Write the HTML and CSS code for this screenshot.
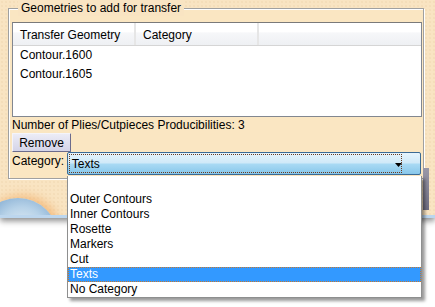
FILE: index.html
```html
<!DOCTYPE html>
<html lang="en">
<head>
    <meta charset="UTF-8">
    <title>Geometries to add for transfer</title>
    <link rel="stylesheet" href="styles.css">
</head>
<body>
    <div class="window">
        <div class="group">
            <span class="group-title">Geometries to add for transfer</span>

            <div class="listview">
                <div class="lv-header">
                    <div class="lv-col col-geom">Transfer Geometry</div>
                    <div class="lv-col col-cat">Category</div>
                    <div class="lv-col col-fill"></div>
                </div>
                <div class="lv-row">Contour.1600</div>
                <div class="lv-row">Contour.1605</div>
            </div>

            <div class="info">Number of Plies/Cutpieces Producibilities: 3</div>
            <button class="btn">Remove</button>

            <div class="cat-row">
                <span class="cat-label">Category:</span>
                <div class="combo">
                    <div class="combo-focus">Texts</div>
                    <svg class="combo-arrow" width="8" height="4" viewBox="0 0 8 4"><path d="M0 0h7L3.5 4z" fill="#000"/></svg>
                </div>
            </div>
        </div>
        <div class="globe"></div>
        <div class="side-btn"></div>
    </div>

    <!-- open drop-down list of the combo -->
    <ul class="dropdown">
        <li>&nbsp;</li>
        <li>Outer Contours</li>
        <li>Inner Contours</li>
        <li>Rosette</li>
        <li>Markers</li>
        <li>Cut</li>
        <li class="selected">Texts</li>
        <li>No Category</li>
    </ul>
</body>
</html>
```

FILE: styles.css
```css
body {
    margin: 0;
    background: #fff;
    font-family: 'Liberation Sans', Arial, sans-serif;
    font-size: 12px;
    color: #000;
    width: 435px;
    height: 307px;
    overflow: hidden;
    position: relative;
}

.window {
    position: relative;
    height: 218px;
    padding: 8px 0 0 8px;
    box-sizing: border-box;
    background-color: #f9e4c2;
    background-image: radial-gradient(rgba(220, 190, 140, 0.35) 0.6px, transparent 0.8px);
    background-size: 4px 4px;
    border-bottom: 3px solid #bcd6ee;
    box-shadow: 0 3px 6px rgba(0, 0, 0, 0.45);
    overflow: hidden;
}

.group {
    position: relative;
    width: 416px;
    height: 171px;
    box-sizing: border-box;
    border: 1px solid #a0a0a0;
    box-shadow: 1px 1px 0 #fff, inset 1px 1px 0 #fff;
    padding: 13px 2px 0 3px;
    background: #fae6c2;
}

.group-title {
    position: absolute;
    top: -8px;
    left: 9px;
    padding: 0 3px;
    background: #f9e4c2;
    line-height: 15px;
}

.listview {
    width: 410px;
    height: 95px;
    box-sizing: border-box;
    background: #fff;
    border: 1px solid #828790;
    border-top-color: #7a7a7a;
    overflow: hidden;
}

.lv-header {
    display: flex;
    height: 22px;
    background: linear-gradient(#fff 0, #fff 40%, #f6f7f9 45%, #eef0f3 100%);
    border-bottom: 1px solid #d5d5d5;
}

.lv-col {
    box-sizing: border-box;
    padding: 5px 0 0 7px;
    border-right: 2px solid #e6e6e6;
}

.col-geom { width: 123px; }
.col-cat { width: 123px; }
.col-fill { flex: 1; border-right: none; }

.lv-row {
    height: 19px;
    line-height: 19px;
    padding-left: 7px;
}

.lv-row:first-of-type { margin-top: 3px; }

.info {
    margin-top: 1px;
    line-height: 15px;
}

.btn {
    display: block;
    margin: 0;
    width: 59px;
    height: 19px;
    padding: 0;
    font: inherit;
    color: #000;
    border: 1px solid;
    border-color: #f4f4fa #6b6b8c #6b6b8c #f4f4fa;
    background: linear-gradient(#ececf6, #d4d4e8);
    border-radius: 1px;
}

.cat-row {
    display: flex;
    align-items: flex-start;
}

.cat-label {
    width: 55px;
    line-height: 19px;
}

.combo {
    position: relative;
    width: 355px;
    height: 23px;
    box-sizing: border-box;
    border: 1px solid #3b6a94;
    border-radius: 2px;
    background: linear-gradient(#e5f4fd 0%, #cfe9f8 48%, #a9daf4 52%, #88c7ea 100%);
    padding: 1px 0 0 1px;
}

.combo-focus {
    width: 333px;
    height: 19px;
    box-sizing: border-box;
    border: 1px dotted #6b3b20;
    padding: 1px 0 0 2px;
    line-height: 16px;
}

.combo-arrow {
    position: absolute;
    right: 17px;
    top: 10px;
}

.globe {
    position: absolute;
    left: -22px;
    top: 198px;
    width: 80px;
    height: 80px;
    border-radius: 50%;
    background: radial-gradient(circle at 55% 40%, #e8f0f6 0, #b7d2e8 35%, #7ea8cf 65%, #4c7aa6 85%, #2c537e 100%);
    box-shadow: 4px -3px 10px rgba(240, 160, 80, 0.55);
}

.side-btn {
    position: absolute;
    left: 423px;
    top: 168px;
    width: 6px;
    height: 42px;
    background: linear-gradient(#9a98a8, #6e6c80);
}

.dropdown {
    position: absolute;
    left: 67px;
    top: 176px;
    width: 355px;
    margin: 0;
    padding: 1px 0 0;
    list-style: none;
    box-sizing: border-box;
    background: #fff;
    border: 1px solid #8e8f8f;
    border-top: none;
    box-shadow: 3px 3px 3px rgba(0, 0, 0, 0.4);
}

.dropdown li {
    height: 15px;
    line-height: 15px;
    padding-left: 2px;
    box-sizing: border-box;
}

.dropdown li.selected {
    background: #3399ff;
    color: #fff;
    outline: 1px dotted #c8782c;
    outline-offset: -1px;
}
```
